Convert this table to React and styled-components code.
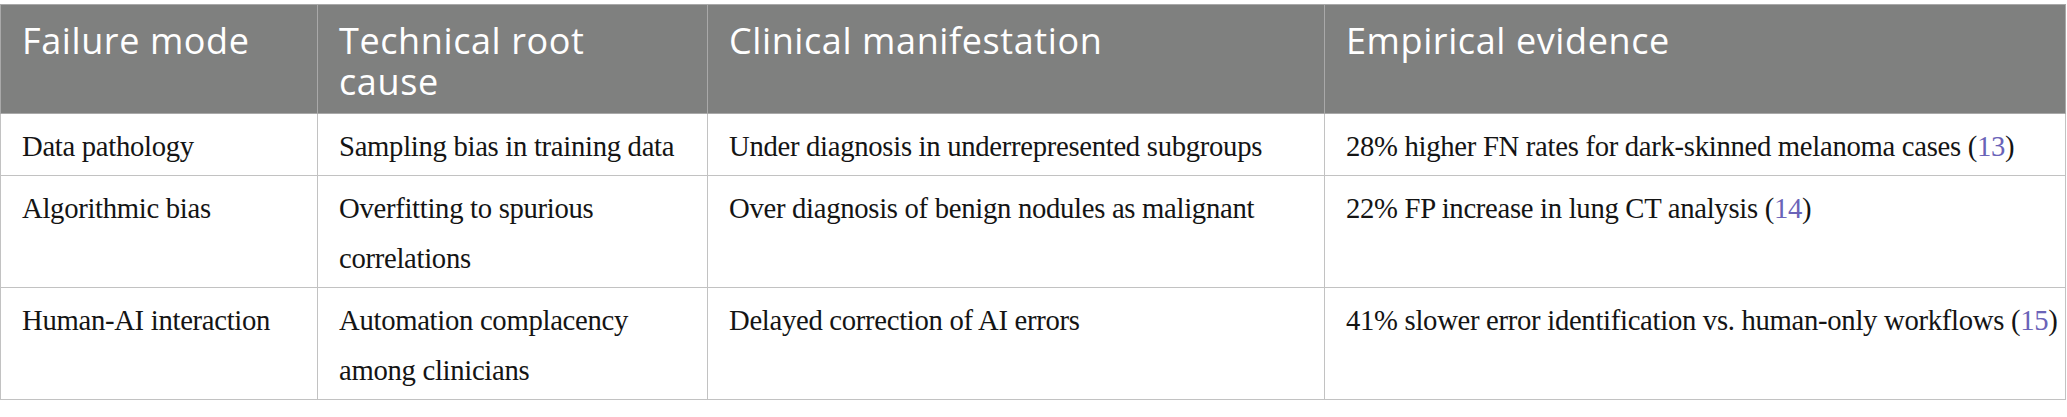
import React from 'react'
import styled, {createGlobalStyle} from 'styled-components'

const GlobalStyle = createGlobalStyle`
    body {
        margin: 0;
        background: #ffffff;
    }
`

const rows = [
    {
        mode: 'Data pathology',
        cause: 'Sampling bias in training data',
        clinical: 'Under diagnosis in underrepresented subgroups',
        evidence: '28% higher FN rates for dark-skinned melanoma cases',
        ref: 13,
    },
    {
        mode: 'Algorithmic bias',
        cause: 'Overfitting to spurious correlations',
        clinical: 'Over diagnosis of benign nodules as malignant',
        evidence: '22% FP increase in lung CT analysis',
        ref: 14,
    },
    {
        mode: 'Human-AI interaction',
        cause: 'Automation complacency among clinicians',
        clinical: 'Delayed correction of AI errors',
        evidence: '41% slower error identification vs. human-only workflows',
        ref: 15,
    },
]

const App = ()=> {
    return (
        <>
            <GlobalStyle />
            <Wrapper>
                <Table>
                    <colgroup>
                        <col style={{width: 317}} />
                        <col style={{width: 390}} />
                        <col style={{width: 617}} />
                        <col style={{width: 741}} />
                    </colgroup>
                    <thead>
                        <tr>
                            <HeadCell>Failure mode</HeadCell>
                            <HeadCell>
                                <HeadLine>Technical root</HeadLine>
                                <HeadLine>cause</HeadLine>
                            </HeadCell>
                            <HeadCell>Clinical manifestation</HeadCell>
                            <HeadCell>Empirical evidence</HeadCell>
                        </tr>
                    </thead>
                    <tbody>
                        {
                            rows.map( row=> (
                                <tr key={row.mode}>
                                    <Cell>{row.mode}</Cell>
                                    <Cell>{row.cause}</Cell>
                                    <Cell>{row.clinical}</Cell>
                                    <Cell>
                                        {row.evidence} (<RefLink href="#">{row.ref}</RefLink>)
                                    </Cell>
                                </tr>
                            ))
                        }
                    </tbody>
                </Table>
            </Wrapper>
        </>
    )
}

const Wrapper = styled.div`
    padding-top: 4px;
    width: 2066px;
`

const Table = styled.table`
    width: 2066px;
    table-layout: fixed;
    border-collapse: collapse;
    border: 1px solid #c2c2c2;
`

const HeadCell = styled.th`
    background: #7f807f;
    color: #ffffff;
    font-family: "Open Sans", "Noto Sans", sans-serif;
    font-weight: 400;
    font-size: 36px;
    letter-spacing: 0.6px;
    line-height: 41px;
    text-align: left;
    vertical-align: top;
    padding: 15px 10px 11px 21px;
    border: 1px solid #a9a9a9;
`

const HeadLine = styled.span`
    display: block;
`

const Cell = styled.td`
    color: #141414;
    font-family: "Liberation Serif", "Times New Roman", serif;
    font-size: 28.7px;
    letter-spacing: -0.3px;
    line-height: 50px;
    vertical-align: top;
    padding: 7px 2px 4px 21px;
    border: 1px solid #c2c2c2;
`

const RefLink = styled.a`
    color: #6a63b8;
    text-decoration: none;
`

export default App
